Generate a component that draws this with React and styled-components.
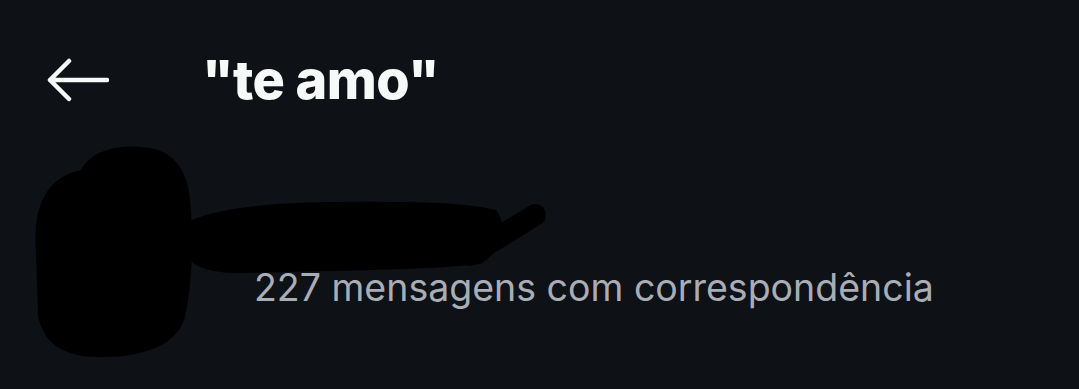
import React from "react";
import styled, { createGlobalStyle } from "styled-components";

const GlobalStyle = createGlobalStyle`
  html, body {
    margin: 0;
    padding: 0;
    background: #0e1116;
  }
  body {
    font-family: Inter, "Noto Sans", sans-serif;
  }
`;

const Page = styled.div`
  width: 1079px;
  height: 389px;
  background: #0e1116;
  overflow: hidden;
  position: relative;
`;

const Header = styled.div`
  display: flex;
  align-items: center;
  height: 80px;
  margin-top: 40px;
  padding-left: 47px;
`;

const BackButton = styled.button`
  display: flex;
  align-items: center;
  justify-content: center;
  width: 62px;
  height: 46px;
  padding: 0;
  margin: 0;
  border: none;
  background: none;
  color: #f7f9f9;
  cursor: pointer;
`;

const Title = styled.h1`
  margin: 0 0 0 93px;
  font-family: Inter, "Noto Sans", sans-serif;
  font-weight: 800;
  font-size: 54px;
  letter-spacing: -0.6px;
  color: #f7f9f9;
  line-height: 1;
`;

const Result = styled.div`
  position: relative;
  display: flex;
  align-items: center;
  gap: 63px;
  height: 200px;
  padding-left: 47px;
  margin-top: 30px;
`;

const Avatar = styled.div`
  width: 144px;
  height: 144px;
  border-radius: 50%;
  background: #222a35;
  flex-shrink: 0;
`;

const Info = styled.div`
  display: flex;
  flex-direction: column;
  gap: 10px;
`;

const Name = styled.div`
  font-family: Inter, "Noto Sans", sans-serif;
  font-size: 36px;
  font-weight: 600;
  color: #f7f9f9;
  line-height: 66px;
  height: 66px;
`;

const Count = styled.div`
  font-family: Inter, "Noto Sans", sans-serif;
  font-size: 37.5px;
  font-weight: 400;
  color: #a9adb5;
  line-height: 44px;
`;

const Redaction = styled.svg`
  position: absolute;
  left: 0;
  top: 0;
  pointer-events: none;
`;

function ArrowLeft() {
  return (
    <svg width="62" height="46" viewBox="0 0 62 46" fill="none">
      <path
        d="M60 23H3M3 23L22 4M3 23L22 42"
        stroke="currentColor"
        strokeWidth="4.5"
        strokeLinecap="round"
        strokeLinejoin="round"
      />
    </svg>
  );
}

export default function App() {
  return (
    <Page>
      <GlobalStyle />
      <Header>
        <BackButton aria-label="Voltar">
          <ArrowLeft />
        </BackButton>
        <Title>"te amo"</Title>
      </Header>
      <Result>
        <Avatar />
        <Info>
          <Name>Conversa</Name>
          <Count>227 mensagens com correspondência</Count>
        </Info>
      </Result>
      <Redaction width="1079" height="389" viewBox="0 0 1079 389">
        <g fill="#000" stroke="#000" strokeLinecap="round" strokeLinejoin="round">
          <path
            d="M38 250 C34 205 50 178 82 172 C92 152 120 145 150 150 C170 153 186 170 188 200 C192 240 190 290 182 320 C172 345 140 356 100 355 C70 356 45 345 40 315 Z"
            strokeWidth="4"
          />
          <path
            d="M186 225 C210 212 260 205 330 204 C400 203 470 204 495 212 C505 225 500 250 480 262 C430 268 330 269 240 271 C205 272 186 262 186 245 Z"
            strokeWidth="4"
          />
          <path d="M470 255 L535 215" strokeWidth="22" fill="none" />
        </g>
      </Redaction>
    </Page>
  );
}
